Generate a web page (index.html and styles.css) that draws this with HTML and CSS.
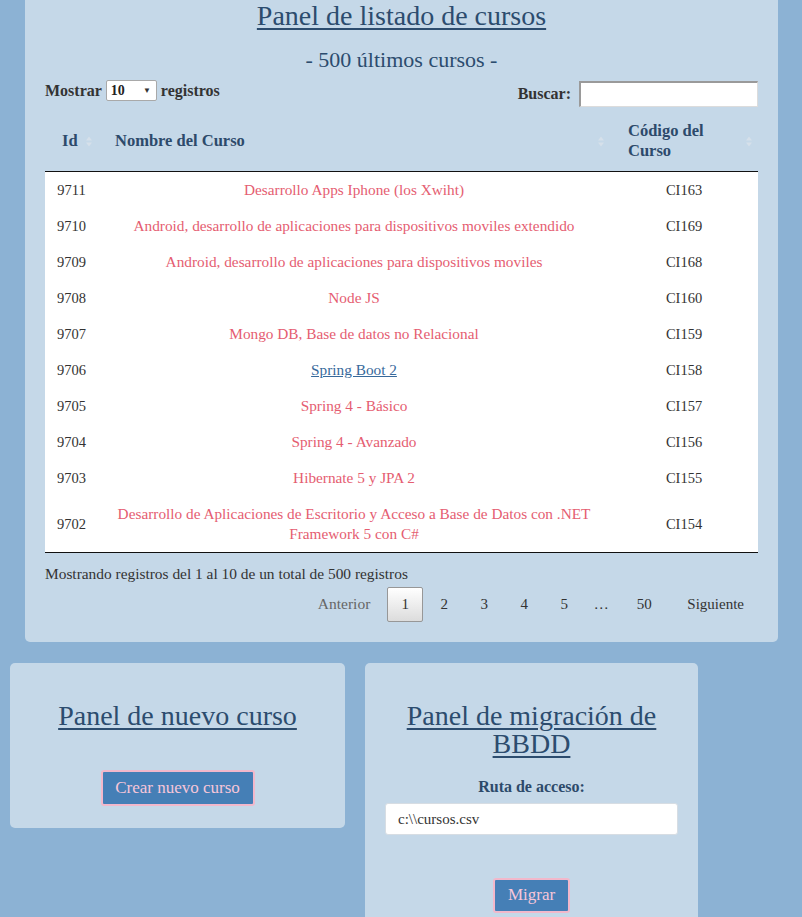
FILE: index.html
```html
<!DOCTYPE html>
<html lang="es">
<head>
<meta charset="utf-8">
<title>Panel de cursos</title>
<link rel="stylesheet" href="styles.css">
</head>
<body>
<div class="panel main">
  <h1 class="title"><span class="ul">Panel de listado de cursos</span></h1>
  <h2 class="subtitle">- 500 últimos cursos -</h2>
  <div class="controls">
    <div class="length">Mostrar <span class="select">10 <span class="caret">&#9660;</span></span> registros</div>
    <div class="search">Buscar: <span class="search-input"></span></div>
  </div>
  <table class="grid">
    <colgroup><col class="c-id"><col class="c-name"><col class="c-code"></colgroup>
    <thead>
      <tr>
        <th class="th-id">Id<svg class="sort" viewBox="0 0 6 11"><path d="M0 4.5 3 0.5 6 4.5Z M0 6.5 6 6.5 3 10.5Z"/></svg></th>
        <th class="th-name">Nombre del Curso<svg class="sort" viewBox="0 0 6 11"><path d="M0 4.5 3 0.5 6 4.5Z M0 6.5 6 6.5 3 10.5Z"/></svg></th>
        <th class="th-code">Código del Curso<svg class="sort" viewBox="0 0 6 11"><path d="M0 4.5 3 0.5 6 4.5Z M0 6.5 6 6.5 3 10.5Z"/></svg></th>
      </tr>
    </thead>
    <tbody>
      <tr><td>9711</td><td><a class="lnk">Desarrollo Apps Iphone (los Xwiht)</a></td><td>CI163</td></tr>
      <tr><td>9710</td><td><a class="lnk">Android, desarrollo de aplicaciones para dispositivos moviles extendido</a></td><td>CI169</td></tr>
      <tr><td>9709</td><td><a class="lnk">Android, desarrollo de aplicaciones para dispositivos moviles</a></td><td>CI168</td></tr>
      <tr><td>9708</td><td><a class="lnk">Node JS</a></td><td>CI160</td></tr>
      <tr><td>9707</td><td><a class="lnk">Mongo DB, Base de datos no Relacional</a></td><td>CI159</td></tr>
      <tr><td>9706</td><td><a class="lnk visited">Spring Boot 2</a></td><td>CI158</td></tr>
      <tr><td>9705</td><td><a class="lnk">Spring 4 - Básico</a></td><td>CI157</td></tr>
      <tr><td>9704</td><td><a class="lnk">Spring 4 - Avanzado</a></td><td>CI156</td></tr>
      <tr><td>9703</td><td><a class="lnk">Hibernate 5 y JPA 2</a></td><td>CI155</td></tr>
      <tr><td>9702</td><td><a class="lnk">Desarrollo de Aplicaciones de Escritorio y Acceso a Base de Datos con .NET Framework 5 con C#</a></td><td>CI154</td></tr>
    </tbody>
  </table>
  <div class="info">Mostrando registros del 1 al 10 de un total de 500 registros</div>
  <div class="pager">
    <span class="pg prev">Anterior</span>
    <span class="pg num current">1</span>
    <span class="pg num">2</span>
    <span class="pg num">3</span>
    <span class="pg num">4</span>
    <span class="pg num">5</span>
    <span class="pg num ellipsis">…</span>
    <span class="pg num wide">50</span>
    <span class="pg next">Siguiente</span>
  </div>
</div>
<div class="bottom">
  <div class="panel box box-new">
    <h2 class="box-title"><span class="ul">Panel de nuevo curso</span></h2>
    <button class="btn btn-new">Crear nuevo curso</button>
  </div>
  <div class="panel box box-migr">
    <h2 class="box-title"><span class="ul">Panel de migración de BBDD</span></h2>
    <div class="field-label">Ruta de acceso:</div>
    <div class="path-input">c:\\cursos.csv</div>
    <button class="btn btn-migr">Migrar</button>
  </div>
</div>
</body>
</html>
```
FILE: styles.css
```css
* { box-sizing: border-box; }
html, body { margin: 0; padding: 0; }
body {
  background: #8cb2d4;
  font-family: "Liberation Serif", "Times New Roman", serif;
  color: #333;
  width: 802px;
  height: 917px;
  overflow: hidden;
}
.panel { background: #c5d8e8; border-radius: 5px; }
.main {
  margin: 0 24px 0 25px;
  width: 753px;
  padding: 0 20px 20px;
  border-top-left-radius: 0;
  border-top-right-radius: 0;
}
.ul { text-decoration: underline; text-decoration-thickness: 2px; text-underline-offset: 3px; }
.title {
  margin: 0;
  font-weight: normal;
  font-size: 28px;
  line-height: 32px;
  text-align: center;
  color: #2c4c6e;
}
.subtitle {
  margin: 13px 0 0;
  font-weight: normal;
  font-size: 22px;
  line-height: 30px;
  text-align: center;
  color: #2c4c6e;
}
.controls {
  margin-top: 5px;
  display: flex;
  justify-content: space-between;
  align-items: flex-start;
  font-weight: bold;
  font-size: 16px;
  color: #333;
}
.length { display: flex; align-items: center; height: 21px; gap: 4px; }
.select {
  display: inline-flex;
  align-items: center;
  justify-content: space-between;
  width: 51px;
  height: 21px;
  background: #fff;
  border: 1px solid #a9a9a9;
  border-radius: 2px;
  padding: 0 5px 0 4px;
  font-size: 14px;
  font-weight: bold;
  color: #222;
}
.caret { font-size: 8px; color: #333; }
.search { display: flex; align-items: center; gap: 8px; height: 26px; margin-top: 1px; }
.search-input {
  display: block;
  width: 179px;
  height: 26px;
  background: #fff;
  border-style: solid;
  border-width: 2px 1px 1px 2px;
  border-color: #9a9a9a #dcdcdc #dcdcdc #9a9a9a;
}
.grid {
  margin-top: 4px;
  width: 713px;
  table-layout: fixed;
  border-collapse: collapse;
}
.c-id { width: 53px; }
.c-name { width: 512px; }
.c-code { width: 148px; }
.grid th {
  position: relative;
  padding: 10px 18px 9px 17px;
  text-align: left;
  font-size: 16.5px;
  line-height: 20px;
  font-weight: bold;
  color: #2d4a6b;
  border-bottom: 1px solid #111;
  vertical-align: middle;
  height: 60px;
}
.grid th.th-id { padding-left: 17px; }
.grid th.th-code { padding-left: 18px; padding-right: 30px; }
.sort {
  position: absolute;
  right: 6px;
  top: 50%;
  width: 6px;
  height: 11px;
  margin-top: -5px;
  fill: #d6e0ea;
}
.grid tbody tr { background: #fff; }
.grid td {
  padding: 8px 10px;
  text-align: center;
  font-size: 15.3px;
  line-height: 20px;
  color: #333;
}
.grid td:first-child, .grid td:last-child { font-size: 14.5px; }
.grid tbody tr:last-child td { border-bottom: 1px solid #111; }
.lnk { color: #e55d71; text-decoration: none; }
.lnk.visited { color: #37699b; text-decoration: underline; }
.info {
  margin-top: 11px;
  font-size: 15.4px;
  line-height: 20px;
  color: #333;
}
.pager {
  margin-top: 3px;
  display: flex;
  justify-content: flex-end;
  align-items: center;
  font-size: 15px;
  height: 35px;
  color: #333;
}
.pg { display: flex; align-items: center; justify-content: center; height: 35px; }
.prev { padding: 0 14px; color: #666; font-size: 15.5px; margin-right: 3px; }
.num { width: 38px; margin-left: 2px; }
.num.current {
  width: 36px;
  margin-left: 0;
  border: 1px solid #979797;
  border-radius: 2px;
  background: linear-gradient(#ffffff, #dcdcdc);
}
.ellipsis { width: 32px; }
.wide { width: 42px; margin-left: 6px; }
.next { padding: 0 14px; margin-left: 8px; }
.bottom {
  display: flex;
  align-items: flex-start;
  margin-top: 21px;
  padding-left: 10px;
  gap: 20px;
}
.box { text-align: center; }
.box-new { width: 335px; height: 165px; padding: 39px 20px 0; }
.box-migr { width: 333px; height: 280px; padding: 39px 20px 0; }
.box-title {
  margin: 0;
  font-weight: normal;
  font-size: 28px;
  line-height: 28px;
  color: #2c4c6e;
}
.box-migr .box-title { padding: 0 20px; }
.btn {
  display: block;
  margin-left: auto;
  margin-right: auto;
  font-family: "Liberation Serif", "Times New Roman", serif;
  background: #457fb6;
  border: 2px solid #f2b8cb;
  border-radius: 3px;
  color: #f7c6d9;
  font-size: 17px;
  padding: 0;
  cursor: pointer;
}
.btn-new { margin-top: 40px; width: 154px; height: 36px; }
.field-label {
  margin-top: 19px;
  font-weight: bold;
  font-size: 16px;
  line-height: 20px;
  color: #2d4a6b;
}
.path-input {
  margin-top: 6px;
  height: 32px;
  background: #fff;
  border: 1px solid #d7dde3;
  border-radius: 3px;
  text-align: left;
  padding: 0 12px;
  font-size: 15px;
  line-height: 30px;
  color: #333;
}
.btn-migr { margin-top: 43px; width: 77px; height: 35px; }
```
